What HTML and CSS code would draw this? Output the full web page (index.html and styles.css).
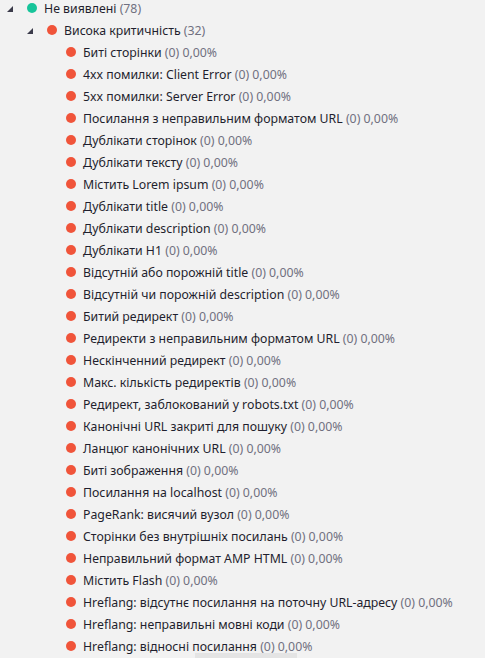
FILE: index.html
```html
<!DOCTYPE html>
<html lang="uk">
<head>
<meta charset="utf-8">
<link rel="stylesheet" href="styles.css">
</head>
<body>
<div class="tree">
  <div class="row lvl1">
    <svg class="tri" width="6" height="6" viewBox="0 0 6 6"><polygon points="6,0 6,6 0,6"/></svg>
    <span class="dot teal"></span>
    <span class="label">Не виявлені <span class="cnt">(78)</span></span>
  </div>
  <div class="row lvl2">
    <svg class="tri" width="6" height="6" viewBox="0 0 6 6"><polygon points="6,0 6,6 0,6"/></svg>
    <span class="dot red"></span>
    <span class="label">Висока критичність <span class="cnt">(32)</span></span>
  </div>
  <div class="row lvl3"><span class="dot red"></span><span class="label">Биті сторінки <span class="cnt">(0) 0,00%</span></span></div>
  <div class="row lvl3"><span class="dot red"></span><span class="label">4xx помилки: Client Error <span class="cnt">(0) 0,00%</span></span></div>
  <div class="row lvl3"><span class="dot red"></span><span class="label">5xx помилки: Server Error <span class="cnt">(0) 0,00%</span></span></div>
  <div class="row lvl3"><span class="dot red"></span><span class="label">Посилання з неправильним форматом URL <span class="cnt">(0) 0,00%</span></span></div>
  <div class="row lvl3"><span class="dot red"></span><span class="label">Дублікати сторінок <span class="cnt">(0) 0,00%</span></span></div>
  <div class="row lvl3"><span class="dot red"></span><span class="label">Дублікати тексту <span class="cnt">(0) 0,00%</span></span></div>
  <div class="row lvl3"><span class="dot red"></span><span class="label">Містить Lorem ipsum <span class="cnt">(0) 0,00%</span></span></div>
  <div class="row lvl3"><span class="dot red"></span><span class="label">Дублікати title <span class="cnt">(0) 0,00%</span></span></div>
  <div class="row lvl3"><span class="dot red"></span><span class="label">Дублікати description <span class="cnt">(0) 0,00%</span></span></div>
  <div class="row lvl3"><span class="dot red"></span><span class="label">Дублікати H1 <span class="cnt">(0) 0,00%</span></span></div>
  <div class="row lvl3"><span class="dot red"></span><span class="label">Відсутній або порожній title <span class="cnt">(0) 0,00%</span></span></div>
  <div class="row lvl3"><span class="dot red"></span><span class="label">Відсутній чи порожній description <span class="cnt">(0) 0,00%</span></span></div>
  <div class="row lvl3"><span class="dot red"></span><span class="label">Битий редирект <span class="cnt">(0) 0,00%</span></span></div>
  <div class="row lvl3"><span class="dot red"></span><span class="label">Редиректи з неправильним форматом URL <span class="cnt">(0) 0,00%</span></span></div>
  <div class="row lvl3"><span class="dot red"></span><span class="label">Нескінченний редирект <span class="cnt">(0) 0,00%</span></span></div>
  <div class="row lvl3"><span class="dot red"></span><span class="label">Макс. кількість редиректів <span class="cnt">(0) 0,00%</span></span></div>
  <div class="row lvl3"><span class="dot red"></span><span class="label">Редирект, заблокований у robots.txt <span class="cnt">(0) 0,00%</span></span></div>
  <div class="row lvl3"><span class="dot red"></span><span class="label">Канонічні URL закриті для пошуку <span class="cnt">(0) 0,00%</span></span></div>
  <div class="row lvl3"><span class="dot red"></span><span class="label">Ланцюг канонічних URL <span class="cnt">(0) 0,00%</span></span></div>
  <div class="row lvl3"><span class="dot red"></span><span class="label">Биті зображення <span class="cnt">(0) 0,00%</span></span></div>
  <div class="row lvl3"><span class="dot red"></span><span class="label">Посилання на localhost <span class="cnt">(0) 0,00%</span></span></div>
  <div class="row lvl3"><span class="dot red"></span><span class="label">PageRank: висячий вузол <span class="cnt">(0) 0,00%</span></span></div>
  <div class="row lvl3"><span class="dot red"></span><span class="label">Сторінки без внутрішніх посилань <span class="cnt">(0) 0,00%</span></span></div>
  <div class="row lvl3"><span class="dot red"></span><span class="label">Неправильний формат AMP HTML <span class="cnt">(0) 0,00%</span></span></div>
  <div class="row lvl3"><span class="dot red"></span><span class="label">Містить Flash <span class="cnt">(0) 0,00%</span></span></div>
  <div class="row lvl3"><span class="dot red"></span><span class="label">Hreflang: відсутнє посилання на поточну URL-адресу <span class="cnt">(0) 0,00%</span></span></div>
  <div class="row lvl3"><span class="dot red"></span><span class="label">Hreflang: неправильні мовні коди <span class="cnt">(0) 0,00%</span></span></div>
  <div class="row lvl3"><span class="dot red"></span><span class="label">Hreflang: відносні посилання <span class="cnt">(0) 0,00%</span></span></div>
</div>
<div class="hscroll"></div>
</body>
</html>
```
FILE: styles.css
```css
html, body {
  margin: 0;
  padding: 0;
  background: #f2f2f2;
  overflow: hidden;
  height: 658px;
}
body {
  position: relative;
  font-family: "Noto Sans", "Open Sans", sans-serif;
  font-size: 12.3px;
  color: #1f1f2e;
}
.tree {
  margin-top: -3px;
}
.row {
  height: 22px;
  display: flex;
  align-items: center;
  white-space: pre;
}
.lvl1 { padding-left: 7px; }
.lvl2 { padding-left: 27px; }
.lvl3 { padding-left: 66px; }
.tri {
  fill: #3b3b4a;
  margin-right: 14px;
  margin-top: 1px;
}
.dot {
  width: 10px;
  height: 10px;
  border-radius: 50%;
  margin-right: 7px;
  flex: none;
}
.teal { background: #17c49a; }
.red { background: #f0543a; }
.cnt { color: #707080; }
.hscroll {
  position: absolute;
  left: 195px;
  bottom: 0;
  width: 102px;
  height: 5px;
  background: #e4e4e4;
}
```
